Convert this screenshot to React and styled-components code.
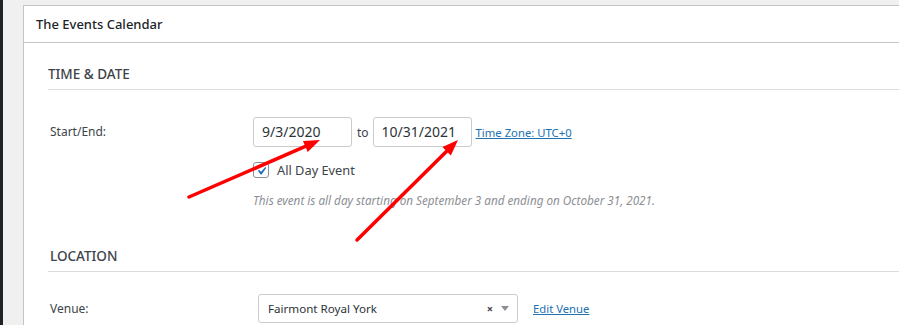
import styled, { createGlobalStyle } from "styled-components";

const GlobalStyle = createGlobalStyle`
  html, body {
    margin: 0;
    padding: 0;
    background: #f0f0f1;
    font-family: "Noto Sans", "Open Sans", sans-serif;
    color: #1d2327;
  }
`;

const Page = styled.div`
  position: relative;
  display: flex;
  width: 899px;
  height: 325px;
  overflow: hidden;
`;

const AdminBar = styled.div`
  width: 3px;
  flex-shrink: 0;
  background: #1d2327;
`;

const Content = styled.div`
  flex: 1;
  padding: 5px 0 0 20px;
`;

const Panel = styled.div`
  background: #fff;
  border: 1px solid #c3c4c7;
  border-right: none;
  height: 100%;
`;

const PanelHeader = styled.h2`
  margin: 0;
  height: 36px;
  padding-left: 12px;
  display: flex;
  align-items: center;
  border-bottom: 1px solid #c3c4c7;
  font-size: 13px;
  font-weight: 500;
  color: #1d2327;
`;

const PanelBody = styled.div`
  padding-left: 24px;
`;

const SectionTitle = styled.h3`
  margin: ${(p) => p.$top}px 0 0;
  padding-bottom: 6px;
  line-height: 18px;
  font-size: 13.5px;
  font-weight: 500;
  color: #3c434a;
  border-bottom: 1px solid #dcdcde;
  padding-left: ${(p) => p.$indent || 0}px;
`;

const Row = styled.div`
  display: grid;
  grid-template-columns: ${(p) => p.$labelWidth}px 1fr;
  margin-top: ${(p) => p.$top}px;
`;

const Label = styled.div`
  padding-left: 2px;
  font-size: 12px;
  line-height: ${(p) => p.$height}px;
  color: #3c434a;
`;

const Fields = styled.div`
  display: flex;
  flex-direction: column;
`;

const DateLine = styled.div`
  display: flex;
  align-items: center;
`;

const DateInput = styled.div`
  box-sizing: border-box;
  width: 99px;
  height: 30px;
  padding-left: 8px;
  border: 1px solid #c8ccd0;
  border-radius: 3px;
  font-size: 14px;
  line-height: 28px;
  color: #2c3338;
`;

const To = styled.span`
  margin: 0 4px 0 5px;
  font-size: 12px;
  color: #3c434a;
`;

const Link = styled.a`
  margin-left: ${(p) => p.$gap}px;
  font-size: 11.3px;
  color: #2271b1;
  text-decoration: underline;
`;

const CheckLine = styled.label`
  display: flex;
  align-items: center;
  margin-top: 15px;
  height: 16px;
  font-size: 12.8px;
  color: #3c434a;
`;

const Box = styled.span`
  box-sizing: border-box;
  width: 16px;
  height: 16px;
  margin-right: 8px;
  border: 1px solid #8c8f94;
  border-radius: 3px;
  display: flex;
  align-items: center;
  justify-content: center;
`;

const Help = styled.p`
  margin: 13px 0 0;
  line-height: 18px;
  font-size: 11.7px;
  font-style: italic;
  color: #8c8f94;
`;

const Select = styled.div`
  box-sizing: border-box;
  width: 260px;
  height: 29px;
  margin-left: 5px;
  padding: 0 8px 0 9px;
  display: flex;
  align-items: center;
  border: 1px solid #c8ccd0;
  border-radius: 3px;
  font-size: 11.6px;
  color: #2c3338;
`;

const SelectText = styled.span`
  flex: 1;
`;

const Clear = styled.span`
  font-size: 11px;
  font-weight: 700;
  color: #3c434a;
  margin-right: 8px;
`;

const Caret = styled.span`
  width: 0;
  height: 0;
  border-left: 4px solid transparent;
  border-right: 4px solid transparent;
  border-top: 5px solid #8c8f94;
`;

const VenueLine = styled.div`
  display: flex;
  align-items: center;
`;

const Arrows = styled.svg`
  position: absolute;
  left: 0;
  top: 0;
  pointer-events: none;
`;

const arrows = [
  { x1: 189, y1: 197, x2: 320, y2: 140 },
  { x1: 357, y1: 240, x2: 458, y2: 140 },
];

const Arrow = ({ x1, y1, x2, y2 }) => {
  const a = Math.atan2(y2 - y1, x2 - x1);
  const len = 16;
  const w = 6;
  const bx = x2 - len * Math.cos(a);
  const by = y2 - len * Math.sin(a);
  const px = -Math.sin(a) * w;
  const py = Math.cos(a) * w;
  return (
    <g>
      <line x1={x1} y1={y1} x2={bx} y2={by} stroke="#ff0000" strokeWidth="3.5" strokeLinecap="round" />
      <polygon points={`${x2},${y2} ${bx + px},${by + py} ${bx - px},${by - py}`} fill="#ff0000" />
    </g>
  );
};

const App = () => {
  return (
    <Page>
      <GlobalStyle />
      <AdminBar />
      <Content>
        <Panel>
          <PanelHeader>The Events Calendar</PanelHeader>
          <PanelBody>
            <SectionTitle $top={22}>TIME &amp; DATE</SectionTitle>
            <Row $labelWidth={205} $top={27}>
              <Label $height={30}>Start/End:</Label>
              <Fields>
                <DateLine>
                  <DateInput>9/3/2020</DateInput>
                  <To>to</To>
                  <DateInput>10/31/2021</DateInput>
                  <Link $gap={4}>Time Zone: UTC+0</Link>
                </DateLine>
                <CheckLine>
                  <Box>
                    <svg width="14" height="14" viewBox="0 0 20 20">
                      <path d="M14.83 4.89l1.34.94-5.81 8.38H9.02L5.78 9.67l1.34-1.25 2.57 2.4z" fill="#2271b1" transform="translate(-1 0) scale(1.15)" />
                    </svg>
                  </Box>
                  All Day Event
                </CheckLine>
                <Help>This event is all day starting on September 3 and ending on October 31, 2021.</Help>
              </Fields>
            </Row>
            <SectionTitle $top={38} $indent={2}>LOCATION</SectionTitle>
            <Row $labelWidth={205} $top={22}>
              <Label $height={29}>Venue:</Label>
              <VenueLine>
                <Select>
                  <SelectText>Fairmont Royal York</SelectText>
                  <Clear>×</Clear>
                  <Caret />
                </Select>
                <Link $gap={15}>Edit Venue</Link>
              </VenueLine>
            </Row>
          </PanelBody>
        </Panel>
      </Content>
      <Arrows width="899" height="325">
        {arrows.map((a, i) => (
          <Arrow key={i} {...a} />
        ))}
      </Arrows>
    </Page>
  );
};

export default App;
